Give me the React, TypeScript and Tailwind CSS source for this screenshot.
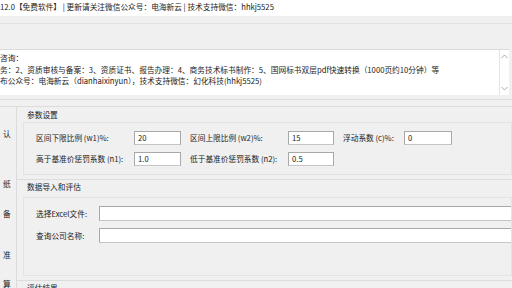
import React from 'react';

const font = "font-['Noto_Sans_CJK_SC','Open_Sans',sans-serif]";

function Field({ label, value, lw, iw }: { label: string; value: string; lw: string; iw: string }) {
  return (
    <div className="flex items-center">
      <div className={`${lw} shrink-0`}>{label}</div>
      <div className={`${iw} h-[14px] shrink-0 bg-white border border-[#a8a8a8] border-b-[#c6c6c6] pl-[3px] leading-[12px]`}>
        {value}
      </div>
    </div>
  );
}

function Chevron({ up }: { up?: boolean }) {
  return (
    <svg width="7" height="5" viewBox="0 0 7 5" className="text-[#a0a0a0]">
      <path d={up ? 'M0.5 4 L3.5 1 L6.5 4' : 'M0.5 1 L3.5 4 L6.5 1'} fill="none" stroke="currentColor" strokeWidth="0.9" />
    </svg>
  );
}

export default function App() {
  return (
    <div className={`w-[512px] h-[288px] overflow-hidden bg-[#f0f0f0] text-[#222] text-[7.7px] ${font} flex flex-col`}>
      {/* title bar */}
      <div className="h-[16px] shrink-0 bg-white leading-[14px] whitespace-nowrap">
        12.0【免费软件】 | 更新请关注微信公众号：电海新云 | 技术支持微信：hhkj5525
      </div>
      <div className="h-[8px] shrink-0 border-b border-[#e2e2e2]" />
      <div className="h-[25px] shrink-0" />

      {/* info text box */}
      <div className="h-[46px] shrink-0 w-[509px] flex bg-white border-t border-[#dadada]">
        <div className="flex-1 overflow-hidden whitespace-nowrap leading-[11.5px] pt-[2px]">
          <div>咨询：</div>
          <div>务：2、资质审核与备案：3、资质证书、报告办理：4、商务技术标书制作：5、国网标书双层pdf快速转换（1000页约10分钟）等</div>
          <div>布公众号：电海新云（dianhaixinyun），技术支持微信：幻化科技(hhkj5525)</div>
        </div>
        <div className="w-[10px] border-l border-[#e4e4e4] flex flex-col items-center justify-between py-[4px]">
          <Chevron up />
          <Chevron />
        </div>
      </div>
      <div className="h-[5px] shrink-0 border-b border-[#dcdcdc]" />
      <div className="h-[6px] shrink-0" />

      {/* main */}
      <div className="flex-1 flex border-t border-[#dcdcdc]">
        <div className="w-[17px] shrink-0 border-r border-[#dcdcdc] whitespace-nowrap pl-[3px]">
          <div className="mt-[21px]">认</div>
          <div className="mt-[38px]">纸</div>
          <div className="mt-[19px]">备</div>
          <div className="mt-[29px]">准</div>
          <div className="mt-[18px]">算</div>
        </div>

        <div className="flex-1 flex flex-col pl-[6px]">
          {/* 参数设置 */}
          <div className="pl-[4px] pt-[3px] leading-[10px]">参数设置</div>
          <div className="mt-[2px] h-[53px] border border-[#e3e3e3] pl-[12px] pt-[8px] flex flex-col gap-[7px]">
            <div className="flex items-center gap-[9px]">
              <Field label="区间下限比例 (w1)%:" value="20" lw="w-[98px]" iw="w-[47px]" />
              <Field label="区间上限比例 (w2)%:" value="15" lw="w-[98px]" iw="w-[46px]" />
              <Field label="浮动系数 (c)%:" value="0" lw="w-[61px]" iw="w-[48px]" />
            </div>
            <div className="flex items-center gap-[9px]">
              <Field label="高于基准价惩罚系数 (n1):" value="1.0" lw="w-[98px]" iw="w-[47px]" />
              <Field label="低于基准价惩罚系数 (n2):" value="0.5" lw="w-[98px]" iw="w-[46px]" />
            </div>
          </div>

          {/* 数据导入和评估 */}
          <div className="mt-[4px] ml-[-6px] border-t border-[#dcdcdc] pl-[10px] pt-[2px] leading-[10px]">数据导入和评估</div>
          <div className="mt-[5px] h-[79px] border border-[#e3e3e3] pl-[12px] pt-[8px] flex flex-col gap-[7px]">
            <div className="flex items-center">
              <div className="w-[63px] shrink-0">选择Excel文件:</div>
              <div className="flex-1 h-[15px] bg-white border border-[#a8a8a8] border-b-[#c6c6c6] border-r-0" />
            </div>
            <div className="flex items-center">
              <div className="w-[63px] shrink-0">查询公司名称:</div>
              <div className="flex-1 h-[15px] bg-white border border-[#a8a8a8] border-b-[#c6c6c6] border-r-0" />
            </div>
          </div>

          {/* 评估结果 */}
          <div className="mt-[4px] ml-[-6px] border-t border-[#dcdcdc] pl-[10px] pt-[2px] leading-[10px]">评估结果</div>
        </div>
      </div>
    </div>
  );
}
